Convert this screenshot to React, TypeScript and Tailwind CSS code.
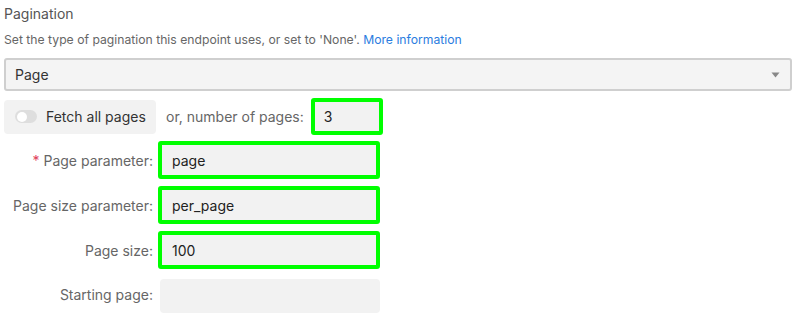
export default function App() {
    const fieldRows = [
        { label: "Page parameter", value: "page", required: true, highlight: true },
        { label: "Page size parameter", value: "per_page", required: false, highlight: true },
        { label: "Page size", value: "100", required: false, highlight: true },
        { label: "Starting page", value: "", required: false, highlight: false },
    ];

    return (
        <div className="w-[800px] h-[323px] bg-white font-['Inter',sans-serif] text-[#333] overflow-hidden">
            <div className="px-[4px] pt-[3px]">
                <h2 className="text-[14px] leading-[22px] text-[#555]">Pagination</h2>
                <p className="mt-[7px] text-[12.2px] leading-[16px] text-[#666]">
                    Set the type of pagination this endpoint uses, or set to 'None'.{" "}
                    <a className="text-[#2b7de0]">More information</a>
                </p>

                <div className="mt-[10px] h-[33px] w-[788px] flex items-center justify-between rounded-[3px] border-2 border-[#cfcfcf] bg-[#f4f4f4] pl-[9px] pr-[10px]">
                    <span className="text-[14px] text-[#333]">Page</span>
                    <svg width="9" height="6" viewBox="0 0 9 6">
                        <path d="M0.5 0.5h8L4.5 5.5z" fill="#888" />
                    </svg>
                </div>

                <div className="mt-[7px] flex items-center">
                    <div className="flex h-[34px] w-[152px] items-center gap-[9px] rounded-[4px] bg-[#f2f2f2] pl-[11px]">
                        <span className="block h-[13px] w-[22px] rounded-full bg-[#dedede] p-[1.5px]">
                            <span className="block h-[10px] w-[10px] rounded-full bg-white" />
                        </span>
                        <span className="text-[14px] text-[#333]">Fetch all pages</span>
                    </div>
                    <span className="ml-[10px] text-[14px] text-[#666]">or, number of pages:</span>
                    <div className="ml-[7px] flex h-[37px] w-[72px] items-center rounded-[3px] border-4 border-[#00ff00] bg-[#f2f2f2] pl-[9px] text-[14px] text-[#222]">
                        3
                    </div>
                </div>

                <div className="mt-[6px] flex flex-col gap-[7px]">
                    {fieldRows.map((row) => (
                        <div key={row.label} className="flex items-center">
                            <label className="w-[149px] text-right text-[14px] text-[#666]">
                                {row.required && <span className="text-[#e0405a]">* </span>}
                                {row.label}:
                            </label>
                            {row.highlight ? (
                                <div className="ml-[5px] flex h-[38px] w-[222px] items-center rounded-[3px] border-4 border-[#00ff00] bg-[#f2f2f2] pl-[10px] text-[14px] text-[#222]">
                                    {row.value}
                                </div>
                            ) : (
                                <div className="ml-[7px] mt-[3px] h-[34px] w-[220px] rounded-[4px] bg-[#f2f2f2]" />
                            )}
                        </div>
                    ))}
                </div>
            </div>
        </div>
    );
}
